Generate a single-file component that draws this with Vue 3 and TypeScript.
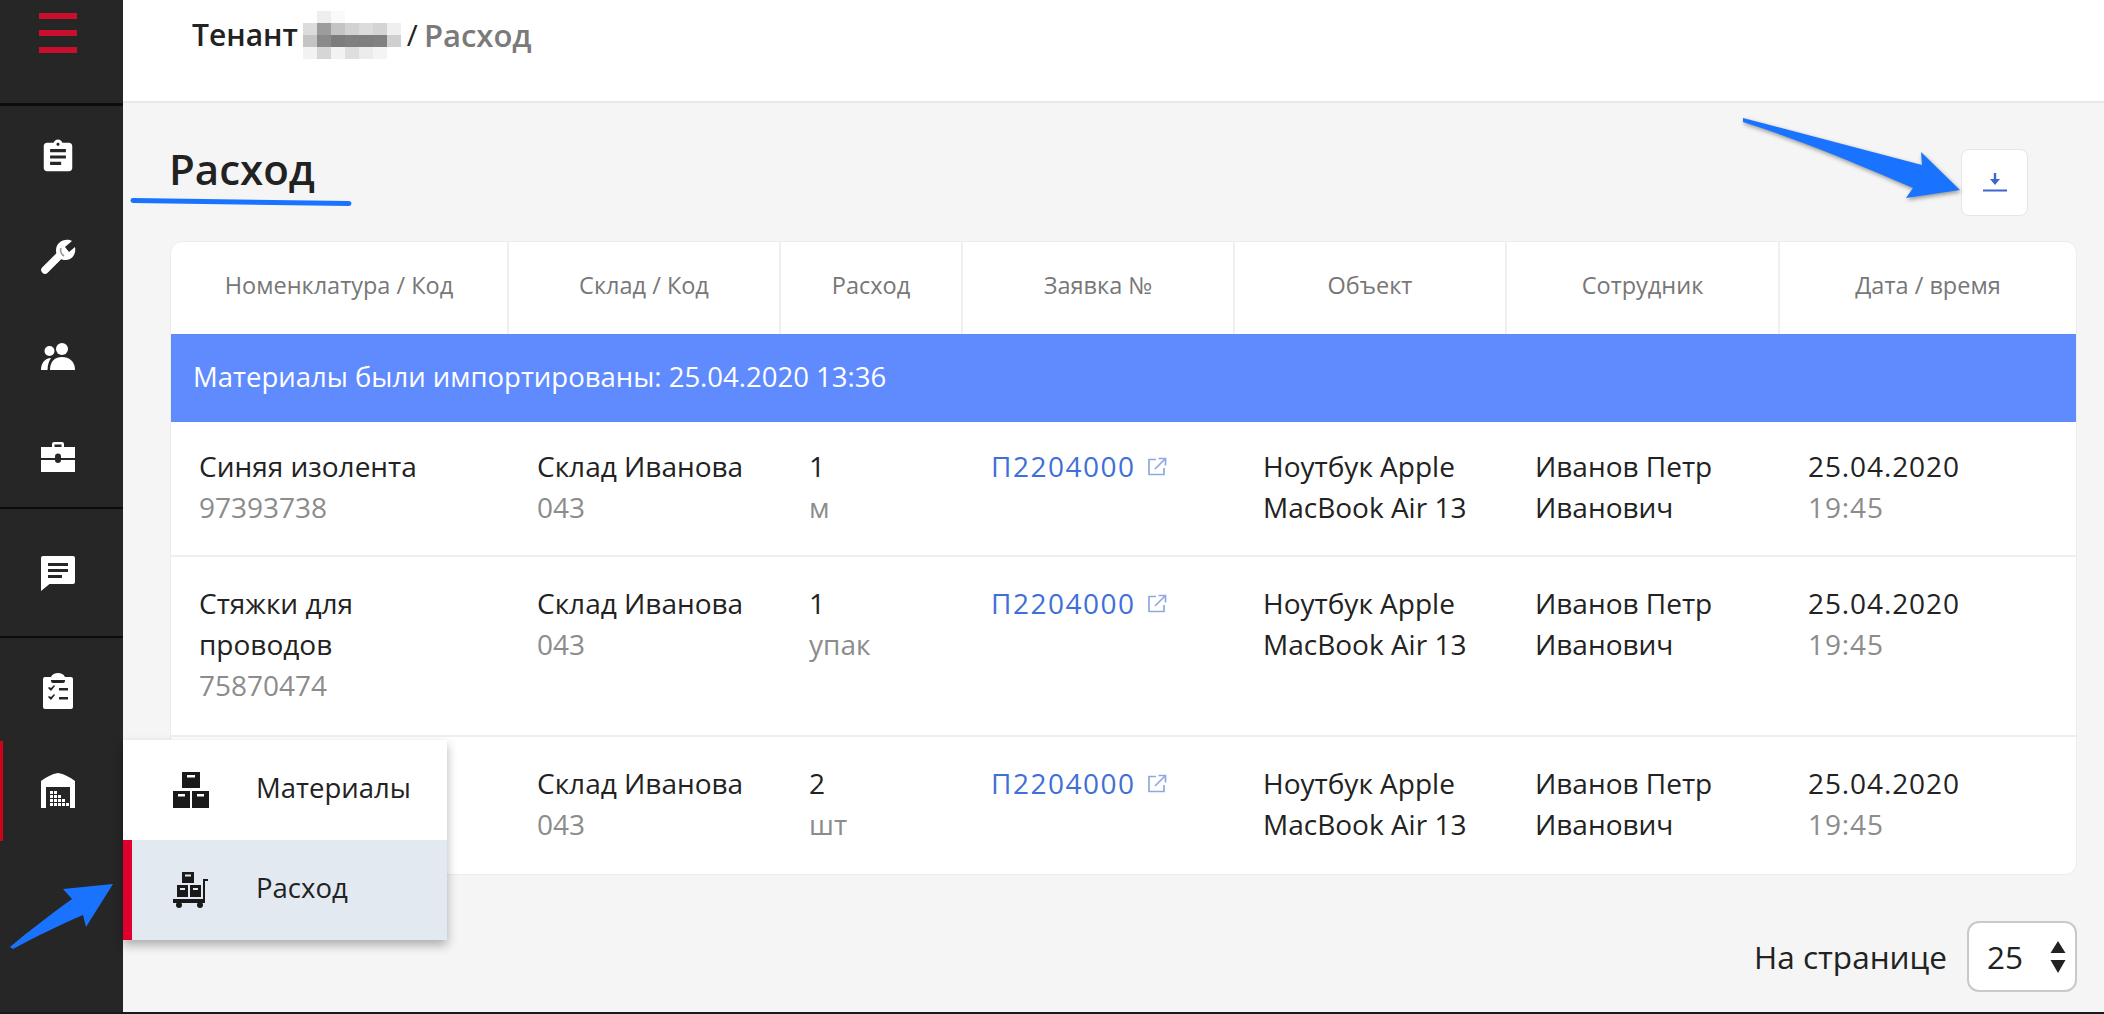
<script setup lang="ts">
interface Row {
  name: string[]
  code: string
  qty: string
  unit: string
}

const columns = ['Номенклатура / Код', 'Склад / Код', 'Расход', 'Заявка №', 'Объект', 'Сотрудник', 'Дата / время']

const rows: Row[] = [
  { name: ['Синяя изолента'], code: '97393738', qty: '1', unit: 'м' },
  { name: ['Стяжки для', 'проводов'], code: '75870474', qty: '1', unit: 'упак' },
  { name: [], code: '', qty: '2', unit: 'шт' },
]

// mosaic over the hidden tenant name
const mosaic = [
  ['#fff', '#eee', '#fafafa', '#fff', '#fff', '#fff', '#fff'],
  ['#dcdcdc', '#9c9c9c', '#c4c4c4', '#d2d2d2', '#dcdcdc', '#d4d4d4', '#efefef'],
  ['#c4c4c4', '#8a8a8a', '#7c7c7c', '#808080', '#7e7e7e', '#808080', '#cfcfcf'],
  ['#f2f2f2', '#d6d6d6', '#f2f2f2', '#dedede', '#ececec', '#f4f4f4', '#fff'],
]
</script>

<template>
  <div class="page">
    <aside class="sidebar">
      <div class="side-top">
        <span class="burger-bar"></span>
        <span class="burger-bar"></span>
        <span class="burger-bar"></span>
      </div>
      <div class="side-group side-group--main">
        <div class="side-item">
          <svg width="38" height="38" viewBox="0 0 24 24" fill="#fff"><path d="M19 3h-4.18C14.4 1.84 13.3 1 12 1c-1.3 0-2.4.84-2.82 2H5c-1.1 0-2 .9-2 2v14c0 1.1.9 2 2 2h14c1.1 0 2-.9 2-2V5c0-1.1-.9-2-2-2zm-7 0c.55 0 1 .45 1 1s-.45 1-1 1-1-.45-1-1 .45-1 1-1zm2 14H7v-2h7v2zm3-4H7v-2h10v2zm0-4H7V7h10v2z"/></svg>
        </div>
        <div class="side-item">
          <svg width="36" height="36" viewBox="0 0 36 36">
            <path d="M5 31 20 16" stroke="#fff" stroke-width="7.5" stroke-linecap="round"/>
            <path d="M19 4 C23 0 29 0 32 2 L25 8 L29 13 L35 8 C36 13 34 18 30 20 C26 22 22 21 19 19 C15 14 15 8 19 4Z" fill="#fff"/>
            <path d="M21 9 C20 12 21 15 24 17" fill="none" stroke="#999" stroke-width="1.6"/>
          </svg>
        </div>
        <div class="side-item">
          <svg width="36" height="28" viewBox="0 0 36 28" fill="#fff">
            <circle cx="9.500" cy="8" r="5"/>
            <circle cx="22" cy="6" r="6"/>
            <path d="M1 27 C1 20 5 15 11 15 C9 18 7.500 22 7.500 27Z"/>
            <path d="M10 27 C10 18 15 14 22 14 C29 14 35 18 35 27Z"/>
          </svg>
        </div>
        <div class="side-item">
          <svg width="36" height="32" viewBox="0 0 36 32" fill="#fff">
            <path d="M12 6V3a2 2 0 0 1 2-2h8a2 2 0 0 1 2 2v3h-2.500V3.500h-7V6z"/>
            <path d="M1 6h34v11H21v-1.500a3 3 0 0 0-6 0V17H1z"/>
            <path d="M1 19h14a3 3 0 0 0 6 0h14v12H1z"/>
          </svg>
        </div>
      </div>
      <div class="side-group side-group--chat">
        <svg width="36" height="36" viewBox="0 0 36 36" fill="#fff"><path fill-rule="evenodd" d="M3 1h30a2 2 0 0 1 2 2v24a2 2 0 0 1-2 2H9.500L1 36V3a2 2 0 0 1 2-2zM8 8v3h20V8zm0 6v3h20v-3zm0 6v3h14v-3z"/></svg>
      </div>
      <div class="side-group side-group--last">
        <div class="side-item">
          <svg width="32" height="36" viewBox="0 0 32 36" fill="#fff">
            <path fill-rule="evenodd" d="M3 4h6c1-2.500 4-4 7-4s6 1.500 7 4h6a2 2 0 0 1 2 2v28a2 2 0 0 1-2 2H3a2 2 0 0 1-2-2V6a2 2 0 0 1 2-2zm6 3v1a2 2 0 0 0 2 2h10a2 2 0 0 0 2-2V7h3v0zM6 15l3 3 4-5-1-1-3 3-2-1zm0 9 3 3 4-5-1-1-3 3-2-1zm11-9v2.500h9V15zm0 9v2.500h9V24z"/>
          </svg>
        </div>
        <div class="side-item side-item--active">
          <svg width="36" height="36" viewBox="0 0 36 36" fill="#fff">
            <path fill-rule="evenodd" d="M18 0 C24 1 30 4 35 8 V35 H30 V14 H6 V35 H1 V8 C6 4 12 1 18 0Z"/>
            <path d="M10 18h3v3h-3zm4 0h3v3h-3zM10 22h3v3h-3zm4 0h3v3h-3zm4 0h3v3h-3zM10 26h3v3h-3zm4 0h3v3h-3zm4 0h3v3h-3zm4 0h3v3h-3zM10 30h3v3h-3zm4 0h3v3h-3zm4 0h3v3h-3zm4 0h3v3h-3zm4 0h3v3h-3z"/>
          </svg>
        </div>
      </div>
    </aside>

    <div class="main">
      <header class="topbar">
        <span class="crumb">Тенант</span>
        <svg class="mosaic" width="98" height="48" viewBox="0 0 98 48">
          <template v-for="(cells, y) in mosaic" :key="y">
            <rect v-for="(color, x) in cells" :key="x" :x="x * 14" :y="y * 12" width="14" height="12" :fill="color" />
          </template>
        </svg>
        <span class="crumb crumb--slash">/</span>
        <span class="crumb crumb--muted">Расход</span>
      </header>

      <section class="content">
        <div class="title-row">
          <h1 class="title">Расход</h1>
          <button class="download" aria-label="Скачать">
            <svg width="24" height="20" viewBox="0 0 24 20" fill="#3f66cc">
              <path d="M10.800 0h2.400v6H17l-5 6-5-6h3.800z"/>
              <rect x="0" y="16.500" width="24" height="2"/>
            </svg>
          </button>
        </div>

        <div class="card">
          <div class="grid head">
            <div v-for="col in columns" :key="col" class="head-cell">{{ col }}</div>
          </div>
          <div class="banner">Материалы были импортированы: 25.04.2020 13:36</div>
          <div v-for="(row, i) in rows" :key="i" class="grid row" :class="{ 'row--first': i === 0 }">
            <div class="cell">
              <div v-for="line in row.name" :key="line">{{ line }}</div>
              <div class="muted">{{ row.code }}</div>
            </div>
            <div class="cell">
              <div>Склад Иванова</div>
              <div class="muted">043</div>
            </div>
            <div class="cell">
              <div>{{ row.qty }}</div>
              <div class="muted">{{ row.unit }}</div>
            </div>
            <div class="cell">
              <a class="link">
                П2204000
                <svg width="20" height="20" viewBox="0 0 20 20" fill="none" stroke="#8fa8e0" stroke-width="1.700">
                  <path d="M9 2.500H2v15h15V11"/>
                  <path d="M8 12 17.500 2.500M11.500 1.500h7v7"/>
                </svg>
              </a>
            </div>
            <div class="cell">
              <div>Ноутбук Apple</div>
              <div>MacBook Air 13</div>
            </div>
            <div class="cell">
              <div>Иванов Петр</div>
              <div>Иванович</div>
            </div>
            <div class="cell cell--date">
              <div>25.04.2020</div>
              <div class="muted">19:45</div>
            </div>
          </div>
        </div>

        <div class="pager">
          <span>На странице</span>
          <div class="select">
            <span>25</span>
            <svg width="16" height="32" viewBox="0 0 16 32" fill="#222">
              <path d="M8 0 15.500 12H.5zM.5 19h15L8 32z"/>
            </svg>
          </div>
        </div>
      </section>
    </div>

    <nav class="flyout">
      <div class="fly-item">
        <svg width="36" height="36" viewBox="0 0 36 36" fill="#1a1a1a">
          <path fill-rule="evenodd" d="M9 0h18v16H9zm5 3v2.500h8V3zM0 19h17v17H0zm5 3v2.500h7V22zM19 19h17v17H19zm5 3v2.500h7V22z"/>
        </svg>
        <span>Материалы</span>
      </div>
      <div class="fly-item fly-item--active">
        <svg width="36" height="36" viewBox="0 0 36 36" fill="#1a1a1a">
          <path fill-rule="evenodd" d="M9 0h12v11H9zm3 2.500v2h6v-2zM4 13h11v12H4zm3 3v2h5v-2zM17 13h11v12H17zm3 3v2h5v-2z"/>
          <path d="M0 27h30V7h5v2h-3v22H0z"/>
          <circle cx="6" cy="33" r="3"/>
          <circle cx="27" cy="33" r="3"/>
        </svg>
        <span>Расход</span>
      </div>
    </nav>

    <svg class="marks" width="2104" height="1014" viewBox="0 0 2104 1014">
      <path d="M133 200.500 349 203.500" stroke="#1a73ff" stroke-width="5" stroke-linecap="round"/>
      <path class="mark-arrow" d="M1743 118 L1922 165 L1921 152 L1960 190 L1906 198 L1913 188 C1860 165 1800 140 1743 122Z" fill="#1a73ff"/>
      <path d="M10 947 C30 930 50 915 72 899 L63 889 L113 884 L86 927 L83 915 C60 925 35 937 13 949Z" fill="#1a73ff"/>
    </svg>
  </div>
</template>

<style scoped>
.page {
  position: relative;
  display: flex;
  width: 2104px;
  height: 1014px;
  overflow: hidden;
  box-sizing: border-box;
  border-bottom: 2px solid #1a1a1a;
  background: #f5f5f5;
  font-family: "Open Sans", "Noto Sans", sans-serif;
  color: #222;
}

.sidebar {
  flex: 0 0 123px;
  display: flex;
  flex-direction: column;
  background: #262626;
}

.side-top {
  height: 90px;
  padding: 13px 7px 0 0;
  display: flex;
  flex-direction: column;
  align-items: center;
  gap: 11px;
  border-bottom: 3px solid #0c0c0c;
}

.burger-bar {
  width: 38px;
  height: 6px;
  background: #c8102e;
}

.side-group {
  border-bottom: 2px solid #0c0c0c;
}

.side-group--main {
  padding-top: 1px;
}

.side-group--chat {
  height: 127px;
  padding-right: 7px;
  display: flex;
  align-items: center;
  justify-content: center;
}

.side-group--last {
  border-bottom: none;
  padding-top: 3px;
}

.side-item {
  height: 100px;
  padding-right: 7px;
  display: flex;
  align-items: center;
  justify-content: center;
}

.side-item--active {
  box-shadow: inset 3px 0 0 #d0021b;
}

.main {
  flex: 1;
  min-width: 0;
  display: flex;
  flex-direction: column;
}

.topbar {
  height: 69px;
  padding: 0 0 32px 69px;
  display: flex;
  align-items: center;
  background: #fff;
  border-bottom: 2px solid #e8e8e8;
}

.crumb {
  font-size: 30px;
  font-weight: 600;
}

.crumb--slash {
  margin-left: 6px;
  font-weight: 400;
}

.crumb--muted {
  margin-left: 6px;
  font-size: 31px;
  color: #7a7a7a;
}

.mosaic {
  margin-left: 5px;
}

.content {
  padding: 0 27px 0 47px;
}

.title-row {
  height: 92px;
  padding-top: 46px;
  display: flex;
  align-items: flex-start;
  justify-content: space-between;
}

.title {
  margin: 0 0 0 -1px;
  font-size: 42px;
  line-height: 40px;
  font-weight: 600;
}

.download {
  width: 67px;
  height: 67px;
  margin-right: 49px;
  padding: 0;
  display: flex;
  align-items: center;
  justify-content: center;
  background: #fff;
  border: 1px solid #e6e6e6;
  border-radius: 8px;
}

.card {
  background: #fff;
  border: 1px solid #ececec;
  border-radius: 12px;
  overflow: hidden;
}

.grid {
  display: grid;
  grid-template-columns: 338px 272px 182px 272px 272px 273px 296px;
}

.head {
  height: 92px;
}

.head-cell {
  display: flex;
  align-items: center;
  justify-content: center;
  padding-bottom: 6px;
  font-size: 23.5px;
  color: #777;
  border-right: 2px solid #f0f0f0;
}

.head-cell:last-child {
  border-right: none;
}

.banner {
  height: 84px;
  padding: 0 0 4px 22px;
  display: flex;
  align-items: center;
  font-size: 27.5px;
  font-weight: 500;
  color: #fff;
  background: #5f8bff;
}

.row {
  border-bottom: 2px solid #efefef;
}

.row:last-child {
  border-bottom: none;
}

.cell {
  padding: 26px 10px 29px 28px;
  font-size: 28px;
  line-height: 41px;
}

.row--first .cell {
  padding-top: 24px;
  padding-bottom: 27px;
}

.cell--date {
  letter-spacing: 0.9px;
}

.muted {
  color: #8c8c8c;
}

.link {
  display: inline-flex;
  align-items: center;
  gap: 12px;
  letter-spacing: 1.5px;
  color: #3f6fd8;
}

.pager {
  margin-top: 46px;
  display: flex;
  align-items: center;
  justify-content: flex-end;
  gap: 20px;
  font-size: 31.5px;
}

.select {
  width: 110px;
  height: 71px;
  box-sizing: border-box;
  padding: 0 9px 0 18px;
  display: flex;
  align-items: center;
  justify-content: space-between;
  background: #fff;
  border: 2px solid #c9c9c9;
  border-radius: 12px;
}

.flyout {
  position: absolute;
  left: 123px;
  top: 740px;
  width: 324px;
  background: #fff;
  box-shadow: 0 5px 10px rgba(0, 0, 0, 0.3);
}

.fly-item {
  height: 100px;
  box-sizing: border-box;
  padding-left: 50px;
  display: flex;
  align-items: center;
  gap: 47px;
  font-size: 27.5px;
}

.fly-item span {
  margin-bottom: 5px;
}

.fly-item--active {
  background: #e3e9f1;
  border-left: 9px solid #e0002d;
  padding-left: 41px;
}

.marks {
  position: absolute;
  left: 0;
  top: 0;
  pointer-events: none;
}

.mark-arrow {
  filter: drop-shadow(1px 2px 2px rgba(0, 0, 0, 0.4));
}
</style>

<style>
body {
  margin: 0;
}
</style>
